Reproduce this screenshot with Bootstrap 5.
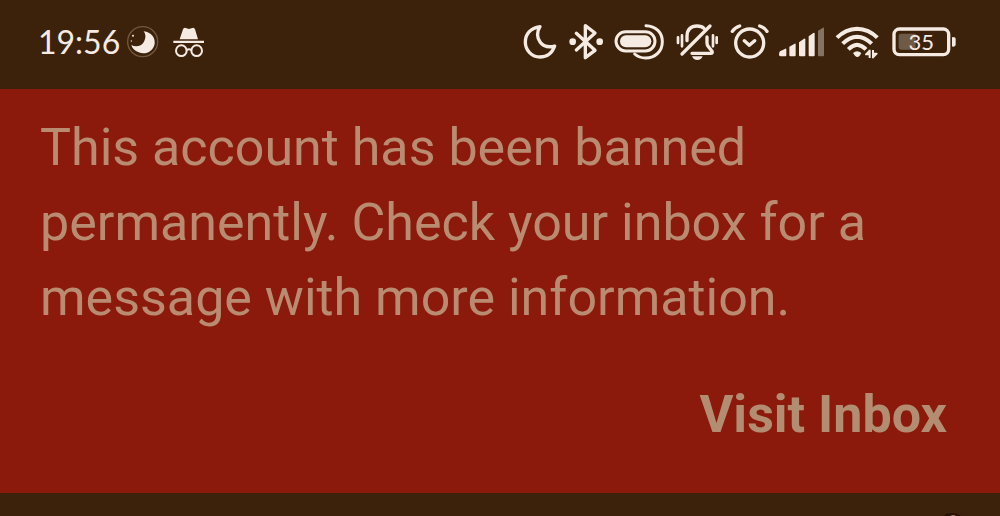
<!DOCTYPE html>
<html lang="en">
<head>
<meta charset="utf-8">
<meta name="viewport" content="width=device-width, initial-scale=1">
<title>Account notice</title>
<link href="https://cdn.jsdelivr.net/npm/bootstrap@5.3.0/dist/css/bootstrap.min.css" rel="stylesheet">
<style>
  body { background: #3c220b; font-family: Roboto, sans-serif; }
  .status-bar { height: 89px; padding: 0 43px 5px 38px; color: #f5ebe3; }
  .status-bar svg { display: block; flex: none; height: 38px; fill: none; stroke: currentColor; stroke-width: 10; stroke-linecap: round; stroke-linejoin: round; overflow: visible; }
  .status-bar .solid { fill: currentColor; stroke: none; }
  .clock { font: 32px/40px Lato, sans-serif; width: 80px; white-space: nowrap; }
  .battery-text { font: 66px Lato, sans-serif; fill: currentColor; stroke: none; }
  .notice { background: #8b1a0c; color: #b98c72; padding: 21px 53px 41px 40px; font-size: 52px; line-height: 75px; }
  .notice p { margin-bottom: 42px; }
  .notice a { color: #b38d72; }
  .next-strip { height: 23px; padding-right: 38px; }
</style>
</head>
<body>
<header class="status-bar d-flex align-items-center justify-content-between">
  <div class="d-flex align-items-center gap-2">
    <time class="clock">19:56</time>
    <svg width="34" viewBox="288 24 102 114" aria-hidden="true">
      <circle cx="338" cy="80" r="45" stroke="#76583f" stroke-width="4"/>
      <path class="solid" d="M341 49C364 52 376 68 374 86C370 110 346 120 326 112C314 108 306 99 304 90C318 98 335 93 342 80C348 69 348 58 341 49Z"/>
      <g class="solid"><circle cx="309" cy="62" r="3"/><circle cx="304" cy="78" r="2"/></g>
    </svg>
    <svg width="40" viewBox="414 24 120 114" aria-hidden="true">
      <path class="solid" d="M449 73L459 43Q461 37 467 39L477 42L487 39Q493 37 495 43L504 73ZM430 77H522V84H430Z"/>
      <g stroke-width="6"><circle cx="454" cy="107" r="16"/><circle cx="500" cy="107" r="16"/><path d="M470 105Q477 101 484 105"/></g>
    </svg>
  </div>
  <div class="d-flex align-items-center gap-2">
    <svg width="37" viewBox="24 24 111 114" aria-hidden="true">
      <path d="M75 35C46 39 31 58 31 81C31 106 50 126 75 126C97 126 112 113 119 93C102 98 86 94 76 82C65 69 65 50 75 35Z"/>
    </svg>
    <svg width="37" viewBox="159 24 111 114" aria-hidden="true">
      <path d="M184 55L240 106L211 128V32L240 54L184 105"/>
      <g class="solid"><circle cx="173" cy="80" r="10"/><circle cx="254" cy="80" r="10"/></g>
    </svg>
    <svg width="55" viewBox="294 24 165 114" aria-hidden="true">
      <rect x="303" y="50" width="117" height="58" rx="29" stroke-width="9"/>
      <rect class="solid" x="315" y="61" width="94" height="36" rx="18"/>
      <path stroke-width="9" d="M393 32C423 33 442 53 442 80C442 108 421 129 392 129C379 129 368 125 359 117"/>
    </svg>
    <svg width="46" viewBox="33 24 138 114" aria-hidden="true">
      <path d="M66 77V64C66 43 78 33 96 33C105 33 112 35 117 40M126 66V84Q126 91 131 96L141 109Q144 115 137 115H81M135 33L51 117"/>
      <path stroke-width="8" d="M39 67V84M51 61V94M144 61V94M155 67V84"/>
      <path class="solid" d="M81 124H113Q109 135 97 135Q85 135 81 124Z"/>
    </svg>
    <svg width="41" viewBox="195 24 123 114" aria-hidden="true">
      <circle cx="254" cy="84" r="42"/>
      <path d="M238 77L253 91L269 77M202 49Q209 38 224 33M284 33Q299 38 306 49"/>
    </svg>
    <svg width="48" viewBox="342 24 144 114" aria-hidden="true">
      <g class="solid">
        <path d="M345 109L361 101Q364 100 364 104V121Q364 124 361 124H348Q342 124 342 119Q342 112 345 109ZM373 95L389 86Q392 85 392 88V121Q392 124 389 124H376Q373 124 373 121ZM402 82L417 71Q421 69 421 73V121Q421 124 418 124H405Q402 124 402 121ZM431 64L445 54Q449 52 449 56V121Q449 124 446 124H434Q431 124 431 121Z"/>
        <path opacity=".4" d="M459 47L474 38Q477 37 477 41V121Q477 124 474 124H462Q459 124 459 121Z"/>
      </g>
    </svg>
    <svg width="49" viewBox="30 24 147 114" aria-hidden="true">
      <g stroke-width="12" stroke-linecap="butt"><path d="M36 68Q62 42 96 41Q132 42 157 68M53 86Q73 66 96 65Q120 66 140 86M70 103Q83 90 96 89Q110 90 123 103"/></g>
      <path class="solid" d="M84 114Q96 104 109 114L104 122Q97 130 90 122Z"/>
      <path stroke-width="6" stroke-linecap="butt" d="M134 104V129M134 107L123 118H134M144 130V105M144 127L155 116H144"/>
    </svg>
    <svg width="65" viewBox="201 24 195 114" role="img" aria-label="Battery 35 percent">
      <rect x="207" y="42" width="164" height="77" rx="16"/>
      <path d="M228 56H272V104H228Q221 104 221 97V63Q221 56 228 56Z" fill="#6f5a48" stroke="none"/>
      <path class="solid" d="M384 66Q392 66 392 73V88Q392 95 384 95Q381 95 381 92V69Q381 66 384 66Z"/>
      <text class="battery-text" x="289" y="105" text-anchor="middle">35</text>
    </svg>
  </div>
</header>
<main class="notice">
  <p>This account has been banned permanently. Check your inbox for a message with more information.</p>
  <div class="text-end"><a href="#" class="d-inline-block fw-bold text-decoration-none">Visit Inbox</a></div>
</main>
<div class="next-strip d-flex justify-content-end align-items-end">
  <svg class="d-block" width="20" height="3" viewBox="0 0 20 3" aria-hidden="true"><circle cx="10" cy="14" r="14" fill="#241104"/><circle cx="11" cy="7" r="5" fill="#a58468"/></svg>
</div>
<script src="https://cdn.jsdelivr.net/npm/bootstrap@5.3.0/dist/js/bootstrap.bundle.min.js"></script>
</body>
</html>
